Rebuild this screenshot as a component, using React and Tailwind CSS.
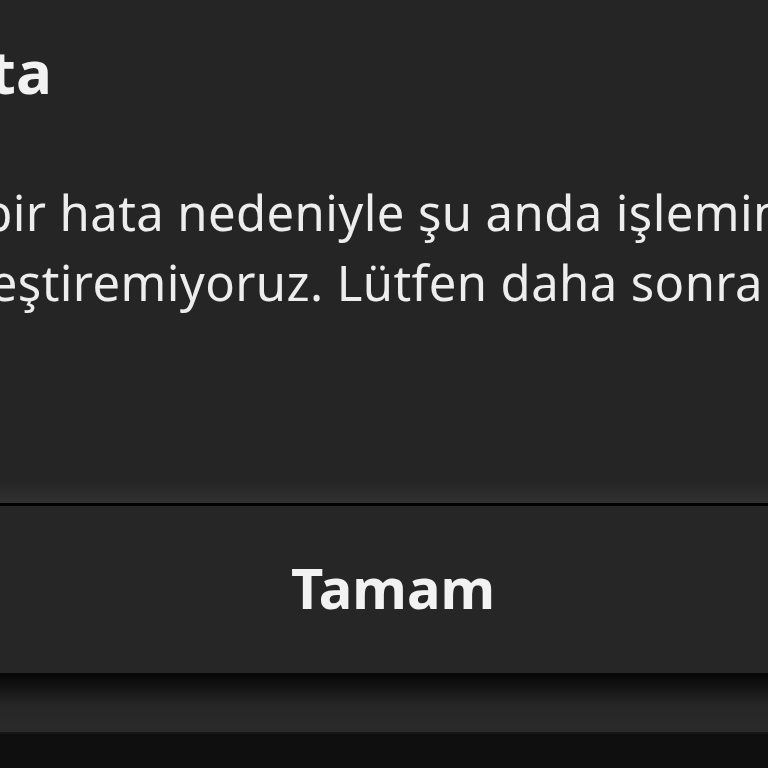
export default function App() {
    return (
        <div
            className="w-[768px] h-[768px] overflow-hidden bg-[#0f0f0f] flex flex-col text-[#f2f2f2]"
            style={{ fontFamily: "'Noto Sans', Lato, sans-serif" }}
        >
            <div className="h-[503px] bg-[#252525] flex flex-col">
                <h1 className="-ml-[92px] mt-[39px] text-[60px] font-bold leading-[64px] whitespace-nowrap">
                    Hata
                </h1>
                <p className="-ml-[180px] mt-[74px] text-[49px] leading-[70px] whitespace-nowrap tracking-[0.4px] text-[#ededed]">
                    <span className="block">Teknik bir hata nedeniyle şu anda işleminizi</span>
                    <span className="block">gerçekleştiremiyoruz. Lütfen daha sonra tekrar deneyin.</span>
                </p>
                <div className="mt-auto h-[22px] bg-gradient-to-b from-[#252525] to-[#313131]" />
            </div>
            <div className="h-[3px] bg-black" />
            <button className="h-[167px] bg-[#262626] flex items-center justify-center text-[56px] font-bold text-[#f2f2f2] pl-[18px] pb-[6px]">
                Tamam
            </button>
            <div className="h-[4px] bg-[#070707]" />
            <div className="h-[55px] bg-gradient-to-b from-[#0a0a0a] via-[#262626] to-[#2a2a2a]" />
            <div className="h-[2px] bg-[#161616]" />
            <div className="flex-1 bg-[#0f0f0f]" />
        </div>
    )
}
